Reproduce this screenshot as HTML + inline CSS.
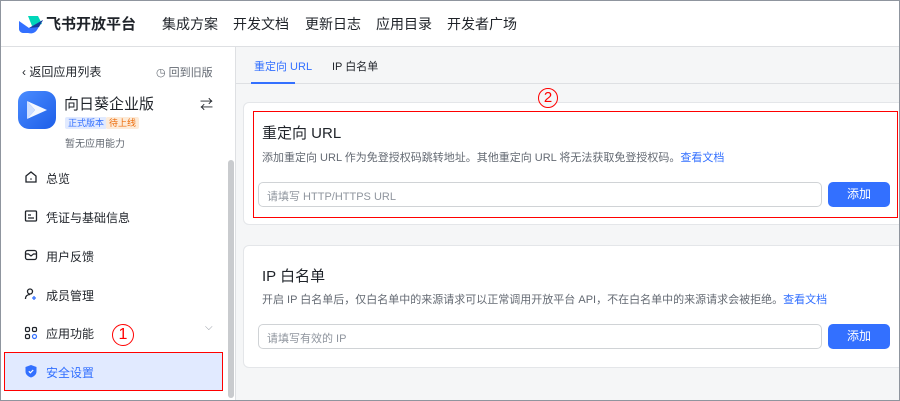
<!DOCTYPE html>
<html><head><meta charset="utf-8"><style>
*{margin:0;padding:0;box-sizing:border-box}
body{width:900px;height:401px;overflow:hidden;font-family:"Liberation Sans","Noto Sans CJK SC",sans-serif;color:#1f2329;background:#f5f6f7;position:relative}
.a{position:absolute;white-space:nowrap}
.frame{position:absolute;left:0;top:0;width:900px;height:401px;border:1px solid #8f959e;pointer-events:none;z-index:10}
.hdr{left:0;top:0;width:900px;height:47px;background:#fff;border-bottom:1px solid #dee0e3}
.nav{top:14px;font-size:14px;color:#1f2329}
.side{left:0;top:47px;width:236px;height:354px;background:#fff;border-right:1px solid #dee0e3}
.mi{left:46px;font-size:12px;color:#1f2329}
.ic{left:24px;width:14px;height:14px}
.card{background:#fff;border:1px solid #e4e6e9;border-radius:6px}
.inp{border:1px solid #d0d3d6;border-radius:5px;background:#fff;height:25px;font-size:11px;color:#8f959e;padding:5px 8px}
.btn{background:#3370ff;color:#fff;border-radius:5px;font-size:12px;text-align:center;line-height:25px;height:25px;width:62px}
</style></head><body>
<div class="a hdr"></div>
<svg class="a" style="left:18px;top:14px" width="26" height="20" viewBox="0 0 26 20"><path d="M10 2h10l4 8-10 2z" fill="#00d6b9"/><path d="M1 7l10 7 14-8-6 10c-2 3-5 4-9 3H5c-2 0-4-2-4-4z" fill="#3370ff"/><path d="M11 14l14-8-4 7z" fill="#133c9a"/></svg>
<div class="a" style="left:46px;top:13px;font-size:15px;font-weight:bold">飞书开放平台</div>
<div class="a nav" style="left:162px">集成方案</div>
<div class="a nav" style="left:233px">开发文档</div>
<div class="a nav" style="left:305px">更新日志</div>
<div class="a nav" style="left:376px">应用目录</div>
<div class="a nav" style="left:447px">开发者广场</div>

<div class="a side"></div>
<div class="a" style="left:228px;top:160px;width:6px;height:238px;background:#c9cbce;border-radius:3px"></div>
<div class="a" style="left:22px;top:63px;font-size:12px">‹ 返回应用列表</div>
<div class="a" style="left:156px;top:64px;font-size:11px;color:#646a73">◷ 回到旧版</div>
<div class="a" style="left:18px;top:91px;width:38px;height:38px;border-radius:11px;background:linear-gradient(135deg,#4a8cff,#1d5ee8)"></div>
<svg class="a" style="left:25px;top:99px" width="24" height="22" viewBox="0 0 24 22"><path d="M2 2l20 9-20 9 8-9z" fill="#fff" opacity=".95"/><path d="M2 2l8 9-8 9z" fill="#cfe0ff"/></svg>
<div class="a" style="left:64px;top:93px;font-size:15px">向日葵企业版</div>
<div class="a" style="left:200px;top:94px;font-size:13px">⇄</div>
<div class="a" style="left:65px;top:117px;font-size:9px;color:#3370ff;background:#e1eaff;padding:0 3px;border-radius:2px;line-height:12px">正式版本</div>
<div class="a" style="left:106px;top:117px;font-size:9px;color:#ed6d0c;background:#fdebd8;padding:0 3px;border-radius:2px;line-height:12px">待上线</div>
<div class="a" style="left:65px;top:135px;font-size:10px;color:#646a73">暂无应用能力</div>

<svg class="a ic" style="top:170px" viewBox="0 0 14 14"><path d="M2 6l5-4 5 4v6H2z" fill="none" stroke="#1f2329" stroke-width="1.3"/><circle cx="7" cy="9" r=".8" fill="#1f2329"/></svg>
<div class="a mi" style="top:170px">总览</div>
<svg class="a ic" style="top:209px" viewBox="0 0 14 14"><rect x="1.5" y="2" width="11" height="10" rx="1" fill="none" stroke="#1f2329" stroke-width="1.3"/><path d="M4 6h3M4 9h6" stroke="#1f2329" stroke-width="1.2"/></svg>
<div class="a mi" style="top:209px">凭证与基础信息</div>
<svg class="a ic" style="top:248px" viewBox="0 0 14 14"><rect x="1.5" y="2.5" width="11" height="9" rx="2" fill="none" stroke="#1f2329" stroke-width="1.3"/><path d="M1.5 6h3l2.5 2 2.5-2h3" fill="none" stroke="#1f2329" stroke-width="1.2"/></svg>
<div class="a mi" style="top:248px">用户反馈</div>
<svg class="a ic" style="top:287px" viewBox="0 0 14 14"><circle cx="6" cy="4.5" r="2.5" fill="none" stroke="#1f2329" stroke-width="1.3"/><path d="M1.5 12c0-3 2-4.5 4.5-4.5" fill="none" stroke="#1f2329" stroke-width="1.3"/><path d="M10 9v4M8 11h4" stroke="#3370ff" stroke-width="1.3"/></svg>
<div class="a mi" style="top:287px">成员管理</div>
<svg class="a ic" style="top:326px" viewBox="0 0 14 14"><rect x="1.5" y="1.5" width="4" height="4" rx="1.2" fill="none" stroke="#1f2329" stroke-width="1.2"/><rect x="8.5" y="1.5" width="4" height="4" rx="1.2" fill="none" stroke="#1f2329" stroke-width="1.2"/><rect x="1.5" y="8.5" width="4" height="4" rx="1.2" fill="none" stroke="#1f2329" stroke-width="1.2"/><circle cx="10.5" cy="10.5" r="2" fill="none" stroke="#3370ff" stroke-width="1.2"/></svg>
<div class="a mi" style="top:325px">应用功能</div>
<div class="a" style="left:205px;top:322px;font-size:10px;color:#8f959e">⌵</div>
<div class="a" style="left:112px;top:324px;width:22px;height:22px;border:1px solid red;border-radius:50%;color:red;font-size:16px;text-align:center;line-height:20px">1</div>
<div class="a" style="left:4px;top:352px;width:219px;height:39px;background:#e1eaff;border:1px solid red"></div>
<svg class="a ic" style="top:364px" viewBox="0 0 14 14"><path d="M7 1l5.5 2v4.5C12.5 10.5 10 12.5 7 13.5 4 12.5 1.5 10.5 1.5 7.5V3z" fill="#3370ff"/><path d="M4.8 7.3l1.6 1.5 2.8-2.8" fill="none" stroke="#fff" stroke-width="1.2"/></svg>
<div class="a mi" style="top:364px;color:#3370ff">安全设置</div>

<div class="a" style="left:236px;top:83px;width:664px;height:1px;background:#dee0e3"></div>
<div class="a" style="left:254px;top:58px;font-size:11px;color:#3370ff">重定向 URL</div>
<div class="a" style="left:251px;top:82px;width:44px;height:2px;background:#3370ff"></div>
<div class="a" style="left:332px;top:58px;font-size:11px">IP 白名单</div>

<div class="a card" style="left:243px;top:102px;width:665px;height:123px"></div>
<div class="a" style="left:538px;top:88px;width:20px;height:20px;border:1px solid red;border-radius:50%;color:red;font-size:15px;text-align:center;line-height:18px;background:#f5f6f7">2</div>
<div class="a" style="left:253px;top:111px;width:645px;height:107px;border:1px solid red;z-index:2"></div>
<div class="a" style="left:262px;top:122px;font-size:15px">重定向 URL</div>
<div class="a" style="left:262px;top:149px;font-size:11px;color:#646a73">添加重定向 URL 作为免登授权码跳转地址。其他重定向 URL 将无法获取免登授权码。<span style="color:#3370ff">查看文档</span></div>
<div class="a inp" style="left:258px;top:182px;width:564px">请填写 HTTP/HTTPS URL</div>
<div class="a btn" style="left:828px;top:182px">添加</div>

<div class="a card" style="left:243px;top:245px;width:665px;height:123px"></div>
<div class="a" style="left:262px;top:265px;font-size:15px">IP 白名单</div>
<div class="a" style="left:262px;top:291px;font-size:11px;color:#646a73">开启 IP 白名单后，仅白名单中的来源请求可以正常调用开放平台 API，不在白名单中的来源请求会被拒绝。<span style="color:#3370ff">查看文档</span></div>
<div class="a inp" style="left:258px;top:324px;width:564px">请填写有效的 IP</div>
<div class="a btn" style="left:828px;top:324px">添加</div>
<div class="frame"></div>
</body></html>
